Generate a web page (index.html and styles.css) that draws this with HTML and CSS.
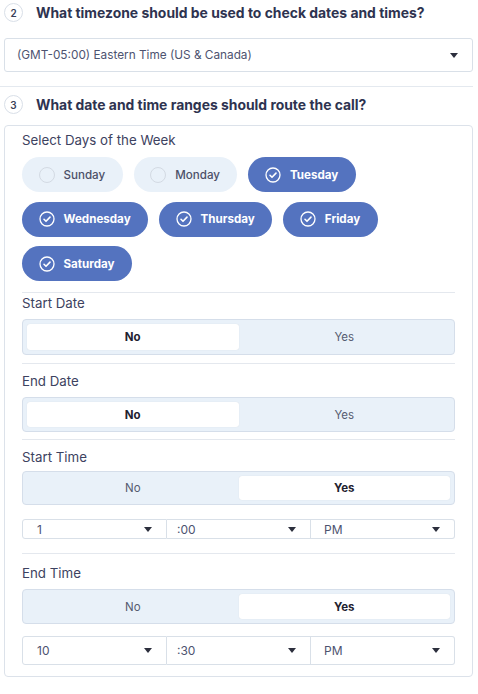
FILE: index.html
```html
<!DOCTYPE html>
<html>
<head>
<meta charset="utf-8">
<link rel="stylesheet" href="styles.css">
</head>
<body>
<div class="page">
  <div class="q q1">
    <span class="badge">2</span>
    <span class="qtext">What timezone should be used to check dates and times?</span>
  </div>
  <div class="tz">
    <span>(GMT-05:00) Eastern Time (US &amp; Canada)</span>
    <span class="caret"></span>
  </div>
  <div class="rule"></div>
  <div class="q q2">
    <span class="badge">3</span>
    <span class="qtext">What date and time ranges should route the call?</span>
  </div>
  <div class="card">
    <div class="label days-label">Select Days of the Week</div>
    <div class="pills">
      <div class="pill"><span class="ring"></span>Sunday</div>
      <div class="pill"><span class="ring"></span>Monday</div>
      <div class="pill on"><svg class="chk" viewBox="0 0 16 16"><circle cx="8" cy="8" r="7" fill="none" stroke="#fff" stroke-width="1.3"/><path d="M5 8.3l2 2 4-4.2" fill="none" stroke="#fff" stroke-width="1.6" stroke-linecap="round" stroke-linejoin="round"/></svg>Tuesday</div>
      <div class="pill on"><svg class="chk" viewBox="0 0 16 16"><circle cx="8" cy="8" r="7" fill="none" stroke="#fff" stroke-width="1.3"/><path d="M5 8.3l2 2 4-4.2" fill="none" stroke="#fff" stroke-width="1.6" stroke-linecap="round" stroke-linejoin="round"/></svg>Wednesday</div>
      <div class="pill on"><svg class="chk" viewBox="0 0 16 16"><circle cx="8" cy="8" r="7" fill="none" stroke="#fff" stroke-width="1.3"/><path d="M5 8.3l2 2 4-4.2" fill="none" stroke="#fff" stroke-width="1.6" stroke-linecap="round" stroke-linejoin="round"/></svg>Thursday</div>
      <div class="pill on"><svg class="chk" viewBox="0 0 16 16"><circle cx="8" cy="8" r="7" fill="none" stroke="#fff" stroke-width="1.3"/><path d="M5 8.3l2 2 4-4.2" fill="none" stroke="#fff" stroke-width="1.6" stroke-linecap="round" stroke-linejoin="round"/></svg>Friday</div>
      <div class="pill on"><svg class="chk" viewBox="0 0 16 16"><circle cx="8" cy="8" r="7" fill="none" stroke="#fff" stroke-width="1.3"/><path d="M5 8.3l2 2 4-4.2" fill="none" stroke="#fff" stroke-width="1.6" stroke-linecap="round" stroke-linejoin="round"/></svg>Saturday</div>
    </div>

    <div class="sep sep1"></div>
    <div class="label l-start">Start Date</div>
    <div class="toggle t1">
      <div class="opt sel">No</div>
      <div class="opt">Yes</div>
    </div>

    <div class="sep sep2"></div>
    <div class="label l-end">End Date</div>
    <div class="toggle t2">
      <div class="opt sel">No</div>
      <div class="opt">Yes</div>
    </div>

    <div class="sep sep3"></div>
    <div class="label l-stime">Start Time</div>
    <div class="toggle t3">
      <div class="opt">No</div>
      <div class="opt sel">Yes</div>
    </div>
    <div class="selects s1">
      <div class="sel-box"><span class="v1">1</span><span class="caret"></span></div>
      <div class="sel-box"><span>:00</span><span class="caret"></span></div>
      <div class="sel-box"><span class="v3">PM</span><span class="caret"></span></div>
    </div>

    <div class="sep sep4"></div>
    <div class="label l-etime">End Time</div>
    <div class="toggle t4">
      <div class="opt">No</div>
      <div class="opt sel">Yes</div>
    </div>
    <div class="selects s2">
      <div class="sel-box"><span class="v1">10</span><span class="caret"></span></div>
      <div class="sel-box"><span>:30</span><span class="caret"></span></div>
      <div class="sel-box"><span class="v3">PM</span><span class="caret"></span></div>
    </div>
  </div>
</div>
</body>
</html>
```

FILE: styles.css
```css
* { box-sizing: border-box; }
html, body { margin: 0; padding: 0; background: #fff; }
body {
  font-family: Inter, "Noto Sans", "Liberation Sans", sans-serif;
  color: #2f3451;
  width: 478px;
}
.page { padding-top: 3px; }

.q {
  display: flex;
  align-items: center;
  padding-left: 4px;
  height: 19px;
}
.badge {
  width: 19px;
  height: 19px;
  border: 1px solid #d9dfe8;
  border-radius: 50%;
  display: flex;
  align-items: center;
  justify-content: center;
  font-size: 10px;
  font-weight: 600;
  color: #3a3f58;
}
.qtext {
  margin-left: 13px;
  font-size: 13.9px;
  font-weight: 700;
  color: #2e3350;
}

.tz {
  margin: 16px 5px 0 4px;
  height: 34px;
  border: 1px solid #d9e0e8;
  border-radius: 3px;
  display: flex;
  align-items: center;
  justify-content: space-between;
  padding: 0 14px 0 12px;
  font-size: 11.8px;
  color: #4d5370;
}
.caret {
  width: 0;
  height: 0;
  border-left: 4.5px solid transparent;
  border-right: 4.5px solid transparent;
  border-top: 5px solid #2c2f3d;
}

.rule {
  margin: 14px 5px 0 0;
  height: 1px;
  background: #e4e9ef;
}
.q2 { margin-top: 8px; }

.card {
  margin: 11px 5px 0 4px;
  border: 1px solid #dce2ea;
  border-radius: 4px;
  padding: 5px 17px 11px 17px;
}
.label {
  font-size: 13.3px;
  line-height: 18px;
  color: #3d4260;
}

.pills {
  margin-top: 8px;
  display: flex;
  flex-wrap: wrap;
  column-gap: 11px;
  row-gap: 9.5px;
}
.pill {
  height: 35px;
  border-radius: 18px;
  background: #e9f1f9;
  display: flex;
  align-items: center;
  padding: 0 17.5px 0 16.5px;
  font-size: 11.6px;
  font-weight: 500;
  color: #4c5068;
}
.pill.on {
  background: #5473bf;
  color: #fff;
  font-weight: 650;
}
.ring {
  width: 16px;
  height: 16px;
  border-radius: 50%;
  border: 1px solid #d3dae3;
  margin-right: 9px;
}
.chk {
  width: 16px;
  height: 16px;
  margin-right: 9px;
}

.sep {
  height: 1px;
  background: #e4e8ee;
}
.sep1 { margin-top: 11px; }
.l-start { margin-top: 1px; }
.sep2 { margin-top: 8px; }
.l-end { margin-top: 8px; }
.sep3 { margin-top: 7px; }
.l-stime { margin-top: 8px; }
.sep4 { margin-top: 14px; }
.l-etime { margin-top: 10px; }

.toggle {
  margin-top: 7px;
  height: 35px;
  border: 1px solid #d5deea;
  border-radius: 4px;
  background: #e9f1f9;
  padding: 4px;
  display: flex;
}
.t1 { margin-top: 7px; height: 36px; }
.t3 { margin-top: 5px; height: 34px; }
.opt {
  flex: 1;
  display: flex;
  align-items: center;
  justify-content: center;
  font-size: 11.5px;
  color: #555b70;
  border-radius: 3px;
}
.opt.sel {
  background: #fff;
  color: #1f2230;
  font-weight: 700;
  box-shadow: 0 0 1px rgba(0,0,0,0.12);
}

.selects {
  display: flex;
  margin-top: 14px;
  height: 20px;
}
.s2 { margin-top: 12px; height: 29px; }
.sel-box {
  flex: 1;
  border: 1px solid #d9e0e8;
  display: flex;
  align-items: center;
  justify-content: space-between;
  padding: 0 14px 0 10px;
  font-size: 12px;
  color: #4d5370;
}
.sel-box + .sel-box { border-left: none; }
.sel-box:first-child { border-radius: 3px 0 0 3px; }
.sel-box:last-child { border-radius: 0 3px 3px 0; }
.v1 { padding-left: 4px; }
.v3 { padding-left: 3px; }
```
